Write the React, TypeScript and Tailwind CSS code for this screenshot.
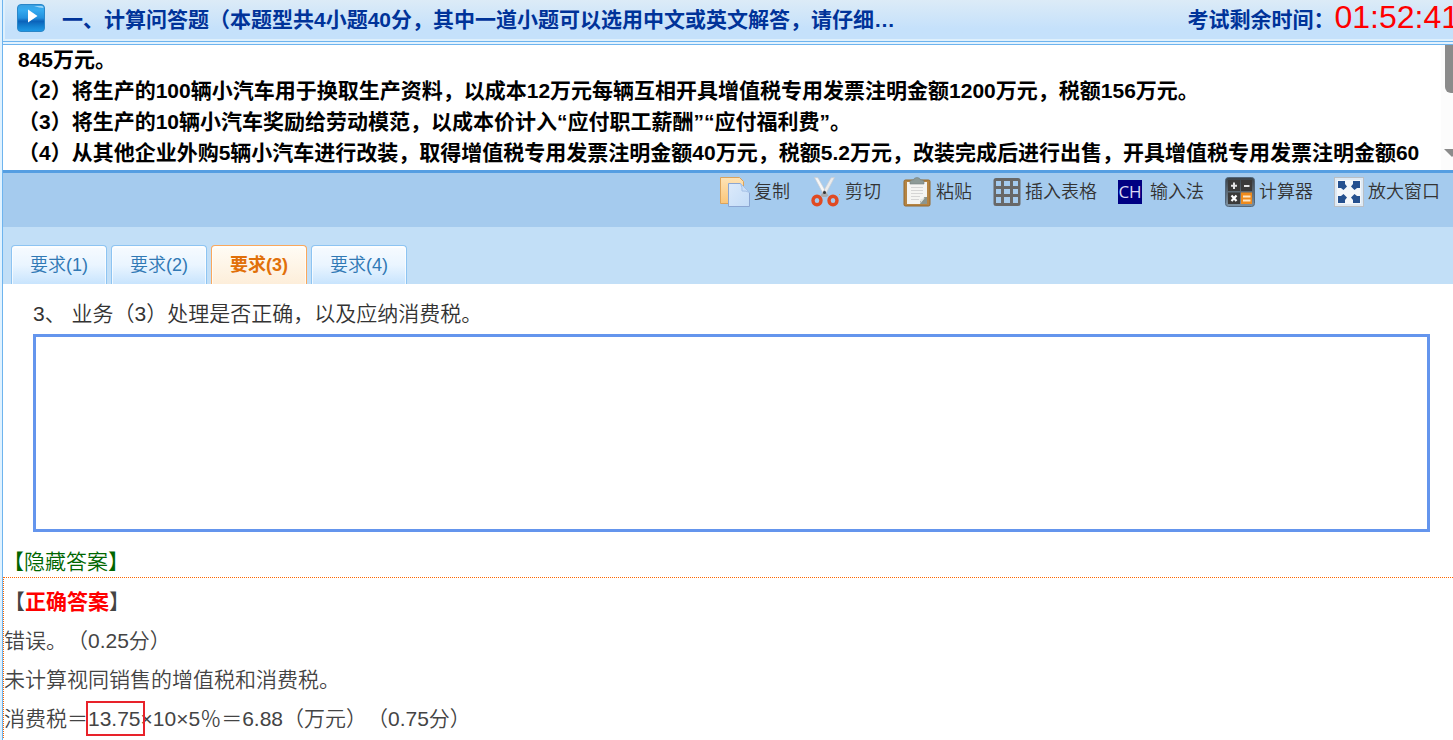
import { useState } from "react"

const tabs = ["要求(1)", "要求(2)", "要求(3)", "要求(4)"]

const PlayIcon = () => (
  <svg width="28" height="28" viewBox="0 0 28 28" className="shrink-0" aria-hidden="true">
    <defs>
      <linearGradient id="play" x1="0" y1="0" x2="0" y2="1">
        <stop offset="0" stopColor="#3a9fe0" />
        <stop offset="0.2" stopColor="#35abf0" />
        <stop offset="0.5" stopColor="#2391de" />
        <stop offset="0.62" stopColor="#0b62ba" />
        <stop offset="0.8" stopColor="#1380d0" />
        <stop offset="1" stopColor="#1f9ae6" />
      </linearGradient>
    </defs>
    <rect x="0.5" y="0.5" width="27" height="27" rx="3.5" fill="url(#play)" stroke="#2a86c8" />
    <path d="M17 2h8q1.500 0 1.500 2-4 0-9.500-2z" fill="#b8e4ff" opacity="0.8" />
    <path d="M11 5.500v13l9.500-6.500z" fill="#fff" />
  </svg>
)

const CopyIcon = () => (
  <svg width="30" height="30" viewBox="0 0 30 30" aria-hidden="true">
    <defs>
      <linearGradient id="copyBack" x1="0" y1="0" x2="0" y2="1">
        <stop offset="0" stopColor="#fde3b6" />
        <stop offset="1" stopColor="#fbc679" />
      </linearGradient>
      <linearGradient id="copyFront" x1="0" y1="0" x2="1" y2="1">
        <stop offset="0" stopColor="#dceafb" />
        <stop offset="1" stopColor="#c3dcf7" />
      </linearGradient>
    </defs>
    <path d="M.5.500h19l4 4v22H.500z" fill="url(#copyBack)" stroke="#dba35c" />
    <path d="M8.500 6.500h12l9 9v14h-21z" fill="url(#copyFront)" stroke="#8ba6d2" />
    <path d="M20.500 6.500q2 4 1.500 7.500 4-.5 7.500 1.500z" fill="#c9dff8" stroke="#a5c0e6" />
  </svg>
)

const CutIcon = () => (
  <svg width="30" height="30" viewBox="0 0 30 30" aria-hidden="true">
    <path d="M3.500.500 7 .8l9.500 17-3 1.500z" fill="#f7f7f7" stroke="#c9cdd2" strokeWidth="0.7" />
    <path d="M23.500.500 20 .8l-9.500 17 3 1.500z" fill="#ececec" stroke="#c9cdd2" strokeWidth="0.7" />
    <path d="m9.500 18.500 4-5.500 4 5.500-2 1.500h-4z" fill="#a9adb0" />
    <circle cx="13.500" cy="15.500" r="1.500" fill="#333" />
    <ellipse cx="6" cy="23.500" rx="4" ry="4.200" fill="none" stroke="#e04a22" strokeWidth="3.400" />
    <ellipse cx="22" cy="23.500" rx="4" ry="4.200" fill="none" stroke="#e04a22" strokeWidth="3.400" />
    <path d="M28 17.500h1" stroke="#e8a34c" />
  </svg>
)

const PasteIcon = () => (
  <svg width="30" height="30" viewBox="0 0 30 30" aria-hidden="true">
    <rect x="2" y="3" width="26" height="26" rx="1.500" fill="#b58443" stroke="#94682f" />
    <path d="M5 5h20v22H5z" fill="#f4f4f2" />
    <path d="M9 10.500h12M9 13.500h12M9 16.500h12M9 19.500h9M9 22.500h8" stroke="#d5d5d5" />
    <path d="M18 27v-3q4 0 4-4h3v7z" fill="#8c958d" />
    <path d="M18 27q1-3 .5-5 3 .5 5-2z" fill="#dfe3df" />
    <path d="M8 7V4.500q0-1 2-1.500h1.500q.5-2.500 3.500-2.500t3.500 2.500H20q2 .5 2 1.500V7z" fill="#8d9a97" stroke="#75827f" strokeWidth="0.600" />
  </svg>
)

const TableIcon = () => (
  <svg width="28" height="30" viewBox="0 0 28 30" aria-hidden="true">
    <rect x="0.500" y="1" width="27" height="28" rx="2.500" fill="#686868" />
    <path
      d="M3 4h5v5H3zM11 4h6v5h-6zM20 4h5v5h-5zM3 12h5v5H3zM11 12h6v5h-6zM20 12h5v5h-5zM3 20h5v6H3zM11 20h6v6h-6zM20 20h5v6h-5z"
      fill="#a5cbee"
    />
  </svg>
)

const InputIcon = () => (
  <span className="flex h-6 w-6 items-center justify-center bg-[#000082] font-['Open_Sans',sans-serif] text-[17px] leading-6 font-medium text-[#d8d8f4]">
    CH
  </span>
)

const CalculatorIcon = () => (
  <svg width="30" height="30" viewBox="0 0 30 30" aria-hidden="true">
    <defs>
      <linearGradient id="calc" x1="0" y1="0" x2="0" y2="1">
        <stop offset="0" stopColor="#3b4248" />
        <stop offset="1" stopColor="#7e92a2" />
      </linearGradient>
    </defs>
    <rect x="0.500" y="0.500" width="29" height="29" rx="3" fill="url(#calc)" stroke="#52667a" />
    <path d="M3 3h12v11H3zM16 3h11v11H16zM3 15.500h12V27H3z" fill="#3b3a39" />
    <path d="M16 15.500h11V27H16z" fill="#ee8a1c" />
    <path d="M9 5.500v6.500M6 8.800h6M19 9h5.500" stroke="#e4e4e4" strokeWidth="2" />
    <path d="m6.500 18.500 5 5.500M11.500 18.500l-5 5.500" stroke="#fff" strokeWidth="2.200" />
    <path d="M18 19.500h7.500M18 23.500h7.500" stroke="#ffe6c2" strokeWidth="2" />
  </svg>
)

const ExpandIcon = () => (
  <svg width="30" height="30" viewBox="0 0 30 30" aria-hidden="true">
    <rect x="0.500" y="0.500" width="29" height="29" fill="#dfeaf4" stroke="#b9bfc6" />
    <path d="M3 3h24v24H3z" fill="#f4f7fa" />
    <path
      d="M4 4h7v3l2 2.500-3.500 3.500L7 11H4zM26 4h-7v3l-2 2.500 3.500 3.500L23 11h3zM4 26h7v-3l2-2.500L9.500 17 7 19H4zM26 26h-7v-3l-2-2.500 3.500-3.500 2.500 2h3z"
      fill="#24508f"
    />
  </svg>
)

const tools = [
  { label: "复制", icon: <CopyIcon />, gap: "gap-1" },
  { label: "剪切", icon: <CutIcon />, gap: "gap-1" },
  { label: "粘贴", icon: <PasteIcon />, gap: "gap-1" },
  { label: "插入表格", icon: <TableIcon />, gap: "gap-1" },
  { label: "输入法", icon: <InputIcon />, gap: "gap-2" },
  { label: "计算器", icon: <CalculatorIcon />, gap: "gap-1" },
  { label: "放大窗口", icon: <ExpandIcon />, gap: "gap-1" },
]

const Header = () => (
  <header className="flex h-[42px] items-start justify-between overflow-hidden border-b border-[#6eb4ee] bg-linear-to-b from-[#dcebf7] to-[#c5e1fb] to-70% pt-1 pl-3.5 whitespace-nowrap shadow-[inset_2px_-2px_0_#dff0fc]">
    <div className="flex items-start gap-[17px]">
      <PlayIcon />
      <h1 className="text-[21px] leading-8 font-bold text-[#003399]">
        一、计算问答题（本题型共4小题40分，其中一道小题可以选用中文或英文解答，请仔细…
      </h1>
    </div>
    <div className="-mr-1.5 flex items-start">
      <span className="text-[21px] leading-8 font-bold text-[#003399]">考试剩余时间：</span>
      <time className="text-[32px] leading-[26px] text-[#ff0000]">01:52:41</time>
    </div>
  </header>
)

const Question = () => (
  <section className="flex h-[126px] overflow-hidden border-t border-[#6eb4ee] text-[21px] leading-[31px] font-bold text-black">
    <div className="-mt-px min-w-0 flex-1 pl-[15px] whitespace-nowrap">
      <p>845万元。</p>
      <p>（2）将生产的100辆小汽车用于换取生产资料，以成本12万元每辆互相开具增值税专用发票注明金额1200万元，税额156万元。</p>
      <p>（3）将生产的10辆小汽车奖励给劳动模范，以成本价计入“应付职工薪酬”“应付福利费”。</p>
      <p>（4）从其他企业外购5辆小汽车进行改装，取得增值税专用发票注明金额40万元，税额5.2万元，改装完成后进行出售，开具增值税专用发票注明金额60</p>
    </div>
    <div className="flex w-3 flex-col items-end justify-between bg-[#fcfcfc]">
      <div className="h-12 w-2 rounded-bl-md bg-[#8b8b8b]" />
      <svg width="9" height="9" viewBox="0 0 9 9" className="mb-3" aria-hidden="true">
        <path d="M0 0h16l-8 8z" fill="#8b8b8b" />
      </svg>
    </div>
  </section>
)

const App = () => {
  const [activeTab, setActiveTab] = useState(2)

  return (
    <div className="min-h-screen overflow-hidden border-l-2 border-[#e0f2ff] bg-white font-['Liberation_Sans','Noto_Sans_CJK_SC',sans-serif] [text-spacing-trim:space-all]">
      <div className="min-h-screen border-l border-[#6eb4ee]">
        <Header />
        <div className="h-0.5 bg-[#e3f2fe]" />
        <Question />

        <div className="flex h-[57px] items-start justify-end gap-[21px] border-t-[3px] border-[#559ee2] bg-[#a5cbee] pt-1 pr-[13px]">
          {tools.map(({ label, icon, gap }) => (
            <button key={label} className={`flex h-[30px] items-center ${gap} text-[18px] font-[350] text-[#333333]`}>
              {icon}
              {label}
            </button>
          ))}
        </div>

        <div role="tablist" className="flex h-[57px] items-end gap-1 bg-[#c2dff7] pl-2">
          {tabs.map((tab, index) => (
            <button
              key={tab}
              role="tab"
              aria-selected={activeTab === index}
              onClick={() => setActiveTab(index)}
              className={`h-[39px] w-24 rounded-t border border-b-0 text-[18px] shadow-[inset_0_1px_0_1px_#ffffffb0] ${
                activeTab === index
                  ? "border-[#faa85c] bg-linear-to-b from-[#fffcf5] to-[#fdeeda] font-bold text-[#e17009]"
                  : "border-[#8dc4f2] bg-linear-to-b from-[#f7fbff] via-[#eaf5ff] to-[#c8e4fd] font-[350] text-[#3079b5]"
              }`}
            >
              {tab}
            </button>
          ))}
        </div>

        <main className="text-[21px] font-[350] text-[#444444]">
          <div className="pt-3 pr-[23px] pl-[30px]">
            <label htmlFor="answer" className="block leading-9 text-[#333333]">
              3、 业务（3）处理是否正确，以及应纳消费税。
            </label>
            <textarea
              id="answer"
              className="mt-0.5 block h-[198px] w-full resize-none border-3 border-[#6495ed] bg-white p-2 outline-none"
            />
          </div>

          <button className="mt-3.5 block leading-[31px] text-[#006600]">【隐藏答案】</button>

          <section className="border-t border-l border-dotted border-[#ff6600] pt-1 leading-[39px]">
            <h2>
              【<strong className="font-bold text-[#ff0000]">正确答案</strong>】
            </h2>
            <p>错误。（0.25分）</p>
            <p>未计算视同销售的增值税和消费税。</p>
            <p className="whitespace-nowrap">
              消费税＝<span className="-mr-0.5 py-1 pr-0.5 outline-2 outline-[#e8222a]">13.75</span>×10×5％＝6.88（万元）（0.75分）
            </p>
          </section>
        </main>
      </div>
    </div>
  )
}

export default App
